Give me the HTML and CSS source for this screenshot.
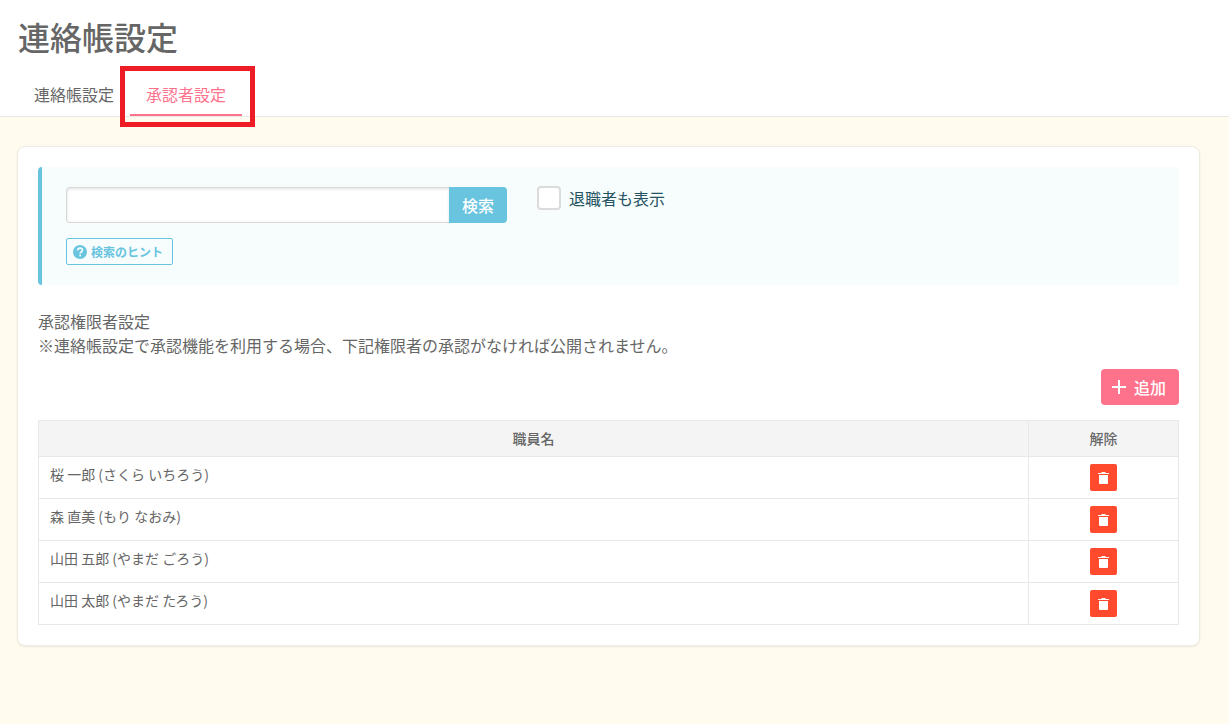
FILE: index.html
```html
<!DOCTYPE html>
<html lang="ja">
<head>
<meta charset="utf-8">
<meta name="viewport" content="width=device-width, initial-scale=1">
<title>連絡帳設定</title>
<link rel="stylesheet" href="styles.css">
</head>
<body>
<svg class="sprite" aria-hidden="true">
  <symbol id="trash" viewBox="0 0 11 12"><path d="M0 1h3l1-1h3l1 1h3v1H0zM1 3h9v8q0 1-1 1H2q-1 0-1-1z" fill="currentColor"/></symbol>
</svg>
<header class="header">
  <h1 class="title">連絡帳設定</h1>
  <nav class="tabs">
    <a class="tab" href="#settings">連絡帳設定</a>
    <a class="tab tab-active" href="#approvers" aria-current="page">承認者設定</a>
  </nav>
</header>
<main class="main">
  <section class="card">
    <form class="search">
      <div class="search-row">
        <div class="search-group">
          <input class="search-input" type="text" aria-label="職員を検索">
          <button class="search-button" type="button">検索</button>
        </div>
        <label class="check"><input class="check-box" type="checkbox"><span>退職者も表示</span></label>
      </div>
      <button class="hint" type="button">
        <svg class="hint-icon" viewBox="0 0 24 24" aria-hidden="true"><circle cx="12" cy="12" r="12" fill="currentColor"/><path d="M7.8 9.2C8 6.6 9.8 5.3 12.1 5.3c2.4 0 4.1 1.4 4.1 3.6 0 3-3.9 3.1-3.9 5.8" fill="none" stroke="#f7fdfd" stroke-width="2.8"/><path d="M10.8 16.4h3v3h-3z" fill="#f7fdfd"/></svg>
        <span>検索のヒント</span>
      </button>
    </form>
    <p class="note">承認権限者設定<br>※連絡帳設定で承認機能を利用する場合、下記権限者の承認がなければ公開されません。</p>
    <div class="actions">
      <button class="add" type="button">
        <svg class="add-icon" viewBox="0 0 14 14" aria-hidden="true"><path d="M6 0h2v6h6v2H8v6H6V8H0V6h6z" fill="currentColor"/></svg>
        <span>追加</span>
      </button>
    </div>
    <table class="table">
      <thead><tr><th>職員名</th><th class="col-remove">解除</th></tr></thead>
      <tbody>
        <tr><td>桜 一郎 (さくら いちろう)</td><td class="cell-remove"><button class="remove" type="button" aria-label="桜 一郎を解除"><svg class="remove-icon" aria-hidden="true"><use href="#trash"/></svg></button></td></tr>
        <tr><td>森 直美 (もり なおみ)</td><td class="cell-remove"><button class="remove" type="button" aria-label="森 直美を解除"><svg class="remove-icon" aria-hidden="true"><use href="#trash"/></svg></button></td></tr>
        <tr><td>山田 五郎 (やまだ ごろう)</td><td class="cell-remove"><button class="remove" type="button" aria-label="山田 五郎を解除"><svg class="remove-icon" aria-hidden="true"><use href="#trash"/></svg></button></td></tr>
        <tr><td>山田 太郎 (やまだ たろう)</td><td class="cell-remove"><button class="remove" type="button" aria-label="山田 太郎を解除"><svg class="remove-icon" aria-hidden="true"><use href="#trash"/></svg></button></td></tr>
      </tbody>
    </table>
  </section>
</main>
</body>
</html>
```
FILE: styles.css
```css
*, *::before, *::after { box-sizing: border-box; }
body {
  margin: 0;
  background: #fffbef;
  color: #666;
  font: 16px/24px "Noto Sans CJK JP", sans-serif;
}
button, input { font: inherit; }
button { cursor: pointer; }
.sprite { display: none; }

.header {
  padding: 12px 18px 0;
  background: #fff;
  border-bottom: 1px solid #e8e8e8;
}
.title { margin: 0; font-size: 32px; line-height: 48px; font-weight: 500; }
.tabs { display: flex; padding-top: 14px; }
.tab {
  position: relative;
  padding: 8px 16px;
  border-bottom: 2px solid transparent;
  color: #666;
  text-decoration: none;
}
.tab-active { border-color: #ff728c; color: #ff728c; }
.tab-active::after {
  content: "";
  position: absolute;
  inset: -8px -13px -13px -10px;
  border: 5px solid #ee1c25;
}

.main { padding: 29px 29px 29px 17px; }
.card {
  padding: 20px;
  background: #fff;
  border: 1px solid #efebe2;
  border-radius: 8px;
  box-shadow: 0 1px 2px rgba(0, 0, 0, .08);
}

.search {
  padding: 20px 24px;
  background: #f7fdfd;
  border-left: 4px solid #68c4df;
  border-radius: 4px;
}
.search-row { display: flex; align-items: flex-start; gap: 30px; margin-bottom: 15px; }
.search-group { display: flex; flex: 0 1 441px; }
.search-input {
  flex: 1;
  min-width: 0;
  height: 36px;
  padding: 0 10px;
  background: #fff;
  border: 1px solid #d9d9d9;
  border-right: 0;
  border-radius: 4px 0 0 4px;
  box-shadow: inset 0 1px 3px rgba(0, 0, 0, .12);
}
.search-button {
  height: 36px;
  padding: 0 13px;
  background: #68c4df;
  border: 0;
  border-radius: 0 4px 4px 0;
  color: #fff;
  font-weight: 500;
}
.check { display: flex; align-items: center; gap: 8px; margin-top: -1px; color: #265362; }
.check-box {
  appearance: none;
  width: 24px;
  height: 24px;
  margin: 0;
  background: #fff;
  border: 2px solid #dbdbdb;
  border-radius: 4px;
}
.hint {
  display: flex;
  align-items: center;
  gap: 4px;
  height: 27px;
  padding: 0 9px 0 6px;
  background: #f7fdfd;
  border: 1px solid #68c4df;
  border-radius: 2px;
  color: #68c4df;
  font-size: 12px;
  font-weight: 700;
}
.hint-icon { width: 14px; height: 14px; }

.note { margin: 24px 0 12px; }
.actions { display: flex; justify-content: flex-end; margin-bottom: 15px; }
.add {
  display: flex;
  align-items: center;
  gap: 8px;
  height: 36px;
  padding: 0 13px 0 11px;
  background: #ff728c;
  border: 0;
  border-radius: 4px;
  color: #fff;
  font-weight: 500;
}
.add-icon { width: 14px; height: 14px; }

.table {
  width: 100%;
  border-collapse: collapse;
  font-size: 14px;
  line-height: 20px;
}
.table th, .table td { border: 1px solid #e8e8e8; }
.table th { padding: 7px 8px 8px; background: #f4f4f4; font-weight: 500; }
.table td { height: 42px; padding: 7px 11px; text-align: left; vertical-align: top; }
.table .col-remove { width: 150px; }
.table .cell-remove { padding: 7px 0; text-align: center; }
.remove {
  display: inline-flex;
  align-items: center;
  justify-content: center;
  width: 27px;
  height: 27px;
  padding: 0;
  background: #ff4a2d;
  border: 0;
  border-radius: 2px;
  color: #fff;
  vertical-align: top;
}
.remove-icon { width: 11px; height: 12px; }
```
